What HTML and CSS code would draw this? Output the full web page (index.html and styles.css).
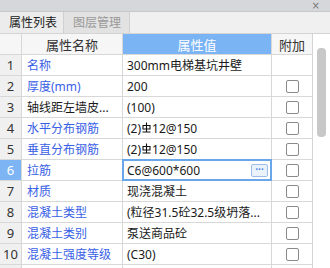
FILE: index.html
```html
<!DOCTYPE html>
<html lang="zh-CN">
<head>
    <meta charset="UTF-8">
    <title>属性列表</title>
    <link rel="stylesheet" href="styles.css">
</head>
<body>
    <div id="panel">
        <!-- title strip with close -->
        <div class="titlebar"><span class="close">×</span></div>
        <!-- tabs -->
        <div class="tabs">
            <div class="tab active">属性列表</div>
            <div class="tab">图层管理</div>
        </div>
        <div class="main">
            <div class="grid">
                <div class="row head">
                    <div class="cell idx"></div>
                    <div class="cell name">属性名称</div>
                    <div class="cell value">属性值</div>
                    <div class="cell extra">附加</div>
                </div>
                <div class="row">
                    <div class="cell idx">1</div>
                    <div class="cell name blue">名称</div>
                    <div class="cell value">300mm电梯基坑井壁</div>
                    <div class="cell extra"></div>
                </div>
                <div class="row">
                    <div class="cell idx">2</div>
                    <div class="cell name blue">厚度(mm)</div>
                    <div class="cell value">200</div>
                    <div class="cell extra"><span class="check"></span></div>
                </div>
                <div class="row">
                    <div class="cell idx">3</div>
                    <div class="cell name">轴线距左墙皮...</div>
                    <div class="cell value">(100)</div>
                    <div class="cell extra"><span class="check"></span></div>
                </div>
                <div class="row">
                    <div class="cell idx">4</div>
                    <div class="cell name blue">水平分布钢筋</div>
                    <div class="cell value">(2)<svg class="steel" width="9" height="11" viewBox="0 0 9 11"><path d="M4.5 0.5V10.5M1 3.5H8V7H1ZM0.5 10H8.5" fill="none" stroke="#111" stroke-width="1.1"/></svg>12@150</div>
                    <div class="cell extra"><span class="check"></span></div>
                </div>
                <div class="row">
                    <div class="cell idx">5</div>
                    <div class="cell name blue">垂直分布钢筋</div>
                    <div class="cell value">(2)<svg class="steel" width="9" height="11" viewBox="0 0 9 11"><path d="M4.5 0.5V10.5M1 3.5H8V7H1ZM0.5 10H8.5" fill="none" stroke="#111" stroke-width="1.1"/></svg>12@150</div>
                    <div class="cell extra"><span class="check"></span></div>
                </div>
                <div class="row">
                    <div class="cell idx selected">6</div>
                    <div class="cell name blue">拉筋</div>
                    <div class="cell value editing">C6@600*600<span class="more">···</span></div>
                    <div class="cell extra"><span class="check"></span></div>
                </div>
                <div class="row">
                    <div class="cell idx">7</div>
                    <div class="cell name blue">材质</div>
                    <div class="cell value">现浇混凝土</div>
                    <div class="cell extra"><span class="check"></span></div>
                </div>
                <div class="row">
                    <div class="cell idx">8</div>
                    <div class="cell name blue">混凝土类型</div>
                    <div class="cell value">(粒径31.5砼32.5级坍落...</div>
                    <div class="cell extra"><span class="check"></span></div>
                </div>
                <div class="row">
                    <div class="cell idx">9</div>
                    <div class="cell name blue">混凝土类别</div>
                    <div class="cell value">泵送商品砼</div>
                    <div class="cell extra"><span class="check"></span></div>
                </div>
                <div class="row">
                    <div class="cell idx">10</div>
                    <div class="cell name blue">混凝土强度等级</div>
                    <div class="cell value">(C30)</div>
                    <div class="cell extra"><span class="check"></span></div>
                </div>
                <!-- next row, only its top edge shows -->
                <div class="row">
                    <div class="cell idx"></div>
                    <div class="cell name"></div>
                    <div class="cell value"></div>
                    <div class="cell extra"></div>
                </div>
            </div>
            <!-- vertical scrollbar -->
            <div class="scrollbar"><div class="thumb"></div></div>
        </div>
    </div>
</body>
</html>
```

FILE: styles.css
```css
body {
    margin: 0;
    padding: 0;
    font-family: "Noto Sans", "Noto Sans CJK SC", sans-serif;
    font-size: 12px;
    color: #1a1a1a;
    background-color: #f0f0f0;
}

#panel {
    width: 330px;
    height: 268px;
    overflow: hidden;
}

.titlebar {
    height: 11px;
    background-color: #d6d7db;
    border-bottom: 1px solid #c6c7cb;
    display: flex;
    justify-content: flex-end;
    align-items: center;
    padding-right: 10px;
}

.close {
    font-size: 10px;
    line-height: 10px;
    color: #777777;
    font-family: "DejaVu Sans", sans-serif;
}

.tabs {
    height: 21px;
    display: flex;
    background-color: #f0f0f0;
    border-bottom: 1px solid #d4d4d4;
}

.tab {
    width: 64px;
    line-height: 21px;
    padding-left: 9px;
    box-sizing: border-box;
    color: #999999;
    background-color: #e2e2e2;
    border-right: 1px solid #d0d0d0;
}

.tab.active {
    color: #222222;
    background-color: #ececec;
}

.tab + .tab {
    width: 66px;
}

.main {
    display: flex;
    background-color: #ffffff;
}

.grid {
    width: 313px;
    border-right: 1px solid #d4d4d4;
    box-sizing: border-box;
}

.row {
    display: grid;
    grid-template-columns: 22px 101px 149px 40px;
    height: 21px;
    border-bottom: 1px solid #d8d8d8;
    box-sizing: border-box;
}

.cell {
    border-right: 1px solid #d8d8d8;
    display: flex;
    align-items: center;
    white-space: nowrap;
    overflow: hidden;
    position: relative;
}

.cell:last-child {
    border-right: none;
}

.idx {
    justify-content: center;
    background-color: #f0f0f0;
    color: #333333;
    font-size: 13px;
}

.idx.selected {
    background-color: #7db5f4;
    color: #ffffff;
}

.name {
    padding-left: 5px;
}

.blue {
    color: #3860e6;
}

.value {
    padding-left: 4px;
}

.extra {
    justify-content: center;
}

.head .cell {
    justify-content: center;
    padding-left: 0;
    background-color: #f6f6f6;
    color: #333333;
    font-size: 13px;
}

.head .value {
    background-color: #7ab4f5;
    color: #ffffff;
}

.steel {
    margin: 0 1px;
    position: relative;
    top: -1px;
}

.editing {
    border: 2px solid #6aa7ea;
    padding-left: 3px;
    margin: -1px 0 -1px -1px;
}

.more {
    position: absolute;
    right: 2px;
    top: 3px;
    width: 15px;
    height: 11px;
    line-height: 8px;
    font-size: 10px;
    text-align: center;
    color: #4a86d8;
    background-color: #eaf2fc;
    border: 1px solid #9cbde6;
    border-radius: 2px;
    font-weight: bold;
}

.check {
    width: 11px;
    height: 11px;
    border: 1px solid #8a8a8a;
    border-radius: 2px;
    background-color: #ffffff;
}

.scrollbar {
    width: 17px;
    padding-top: 14px;
    box-sizing: border-box;
    display: flex;
    justify-content: center;
}

.thumb {
    width: 9px;
    height: 89px;
    background-color: #c8c8c8;
    border-radius: 4px;
}
```
